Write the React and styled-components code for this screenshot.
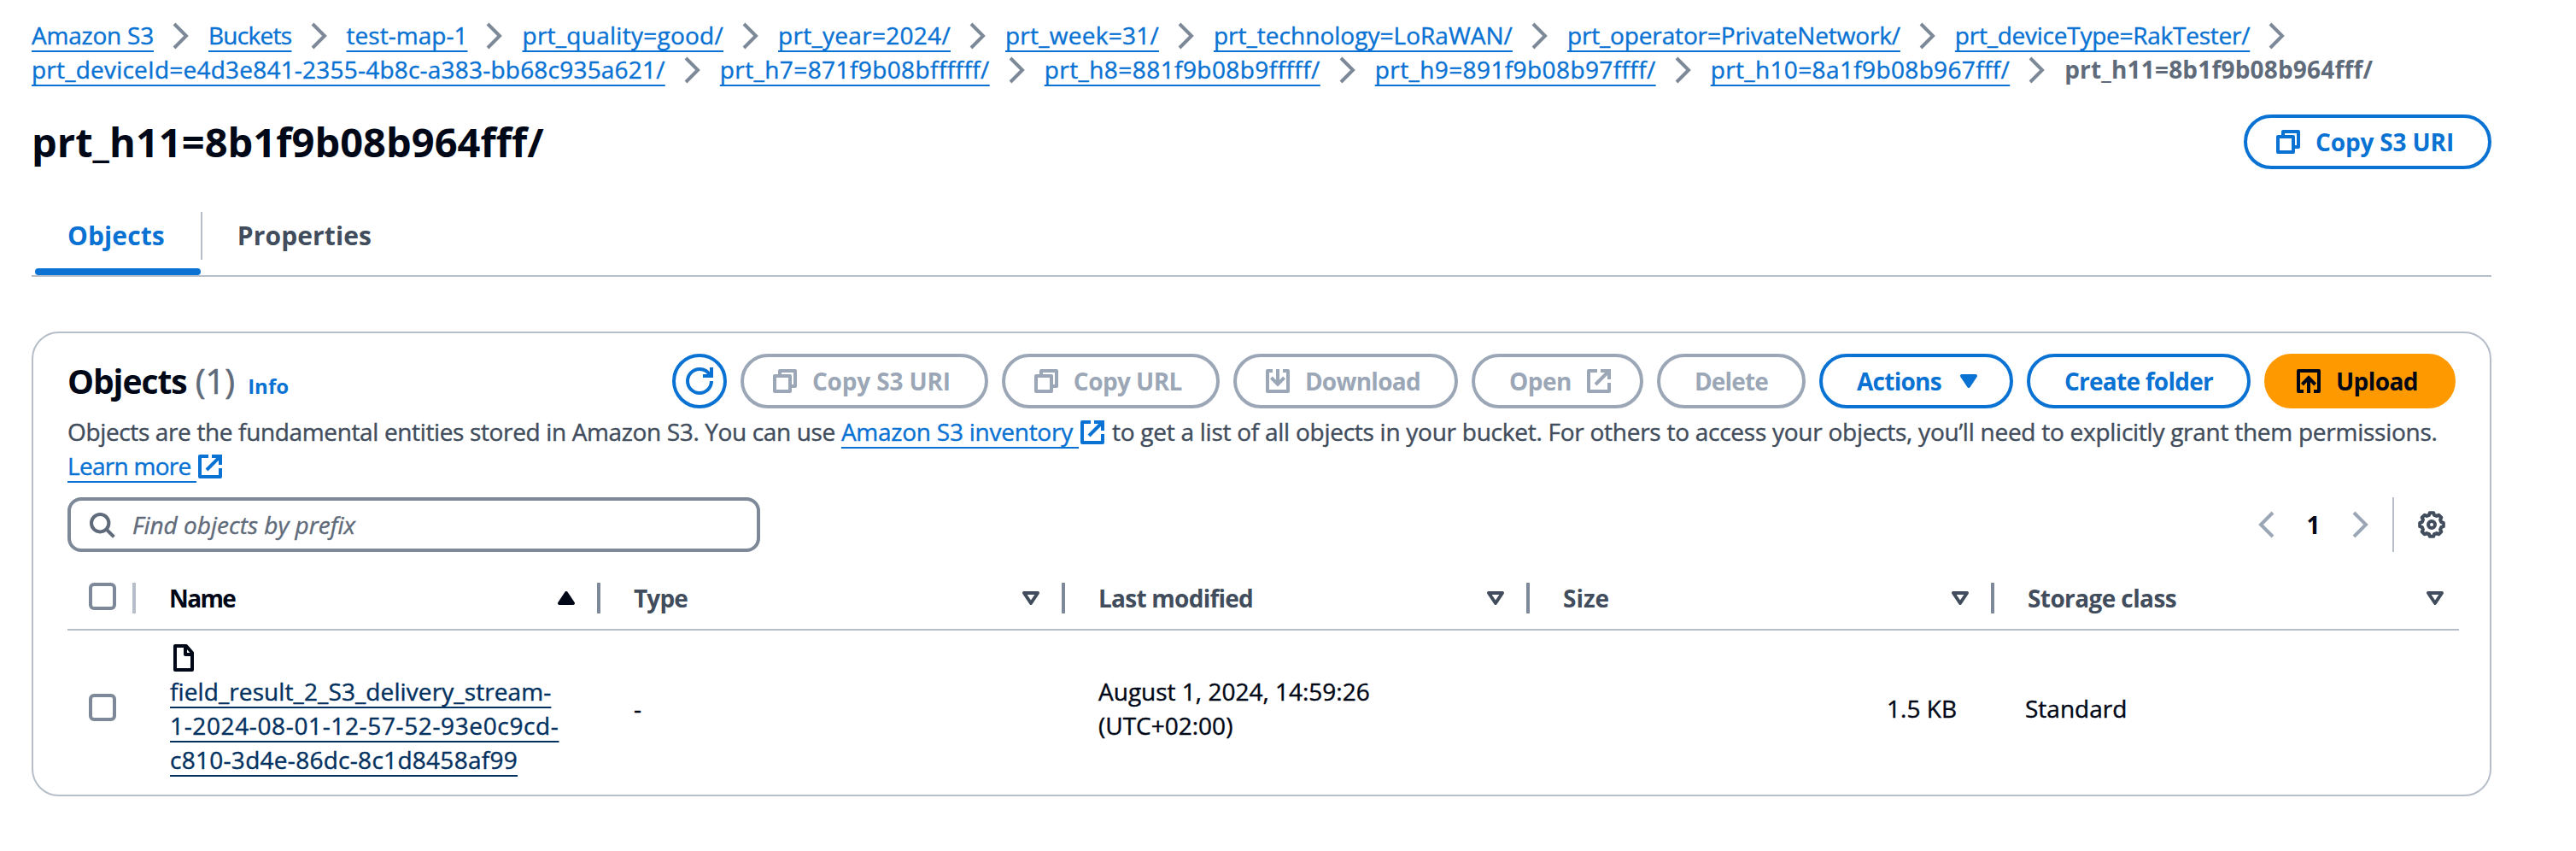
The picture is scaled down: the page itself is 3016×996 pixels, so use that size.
import React from "react";
import styled, { createGlobalStyle, css } from "styled-components";

const GlobalStyle = createGlobalStyle`
  * { box-sizing: border-box; }
  html, body { margin: 0; padding: 0; background: #ffffff; }
  body {
    font-family: "Open Sans", "Noto Sans", sans-serif;
    font-size: 28px;
    line-height: 40px;
    color: #000716;
    -webkit-text-stroke-width: 0.4px;
  }
  h1, h2, p { margin: 0; }
`;

const blue = "#0972d3";
const disabled = "#9ba7b6";

const bold = css`
  font-weight: 700;
  -webkit-text-stroke-width: 0;
`;

const Page = styled.main`
  width: 3016px;
  height: 996px;
  padding: 21px 99px 0 37px;
  overflow: hidden;
`;

const Svg = styled.svg`
  display: block;
  flex: none;
  width: 32px;
  height: 32px;
  fill: none;
  stroke: currentColor;
  stroke-width: 2;
`;

const gearPoints = Array.from({ length: 8 }, (_, tooth) =>
  [
    [-15, 5.8],
    [-9, 7],
    [9, 7],
    [15, 5.8],
  ].map(([offset, radius]) => {
    const angle = ((tooth * 45 + offset) * Math.PI) / 180;
    return `${(8 + radius * Math.cos(angle)).toFixed(2)},${(8 + radius * Math.sin(angle)).toFixed(2)}`;
  })
)
  .flat()
  .join(" ");

const shapes = {
  chevronRight: <path d="m4 1 7 7-7 7" />,
  chevronLeft: <path d="M12 1 5 8l7 7" />,
  copy: (
    <g strokeLinejoin="round">
      <path d="M2 5h9v9H2z" />
      <path d="M5 5V2h9v9h-3" />
    </g>
  ),
  refresh: (
    <>
      <path d="M15 0v5h-5" />
      <path d="M15 8c0 3.87-3.13 7-7 7s-7-3.13-7-7 3.13-7 7-7c2.79 0 5.2 1.63 6.33 4" />
    </>
  ),
  external: (
    <>
      <path d="M9 2h5v5" />
      <path d="m6 10 8-8" />
      <path strokeLinejoin="round" d="M14 9v5H2V2h5" />
    </>
  ),
  download: (
    <>
      <path strokeLinejoin="round" d="M11 2h3v12H2V2h3" />
      <path d="M8 1v8.500M4.200 6 8 9.800 11.800 6" />
    </>
  ),
  upload: (
    <>
      <path strokeLinejoin="round" d="M5 14H2V2h12v12h-3" />
      <path d="M8 15V6.500M4.200 10 8 6.100 11.800 10" />
    </>
  ),
  search: (
    <>
      <circle cx="7.1" cy="7.1" r="5.1" />
      <path d="m10.500 10.500 4.700 4.700" />
    </>
  ),
  caretDown: <path fill="currentColor" strokeLinejoin="round" d="M4 5h8l-4 6z" />,
  sortUp: <path fill="currentColor" strokeLinejoin="round" d="M4 11h8L8 5z" />,
  sortDown: <path strokeLinejoin="round" d="M4 5h8l-4 6z" />,
  file: (
    <g strokeLinejoin="round">
      <path d="M3 1h6.500L13 5v10H3z" />
      <path d="M9 1v5h4" />
    </g>
  ),
  gear: (
    <g strokeLinejoin="round">
      <polygon points={gearPoints} />
      <circle cx="8" cy="8" r="2" />
    </g>
  ),
};

const Icon = ({ name, className }) => (
  <Svg className={className} viewBox="0 0 16 16" aria-hidden="true">
    {shapes[name]}
  </Svg>
);

const Breadcrumbs = styled.nav`
  display: flex;
  flex-direction: column;
`;

const CrumbRow = styled.div`
  display: flex;
  align-items: center;
  height: 40px;
  white-space: nowrap;
`;

const Separator = styled(Icon)`
  margin: 2px 16px 0;
  color: #7d8998;
`;

const Text = styled.span`
  letter-spacing: ${(p) => p.$track || 0}px;
`;

const Link = styled.a`
  color: ${(p) => (p.$visited ? "#033160" : blue)};
  letter-spacing: ${(p) => p.$track || 0}px;
  text-decoration: underline;
  text-decoration-thickness: 2px;
  text-decoration-skip-ink: none;
  text-underline-offset: 7px;
`;

const CurrentCrumb = styled.span`
  ${bold}
  color: #5f6b7a;
  letter-spacing: 0.18px;
`;

const TitleRow = styled.header`
  display: flex;
  justify-content: space-between;
  align-items: flex-start;
  margin-top: 33px;
  height: 64px;
`;

const Title = styled.h1`
  ${bold}
  padding-top: 2px;
  font-size: 47px;
  line-height: 60px;
  letter-spacing: 0.04px;
`;

const Button = styled.button`
  display: flex;
  align-items: center;
  gap: 16px;
  height: 64px;
  padding: 0 ${(p) => (p.$end ? 32 : 40)}px 0 ${(p) => (p.$start ? 32 : 40)}px;
  border: 4px solid ${blue};
  border-radius: 40px;
  background: #ffffff;
  color: ${blue};
  font: 700 28px/40px "Open Sans", "Noto Sans", sans-serif;
  -webkit-text-stroke-width: 0;
  letter-spacing: ${(p) => p.$track || 0}px;
  white-space: nowrap;
  ${(p) =>
    p.$disabled &&
    css`
      border-color: ${disabled};
      color: ${disabled};
    `}
  ${(p) =>
    p.$primary &&
    css`
      border-color: #ff9900;
      background: #ff9900;
      color: #000716;
    `}
  ${(p) =>
    p.$round &&
    css`
      width: 64px;
      padding: 0;
      justify-content: center;
    `}
`;

const Tabs = styled.div`
  display: flex;
  height: 126px;
  padding-top: 50px;
  border-bottom: 2px solid #b6bec9;
`;

const Tab = styled.div`
  ${bold}
  display: flex;
  flex-direction: column;
  justify-content: space-between;
  height: 74px;
  margin-left: ${(p) => (p.$active ? 4 : 0)}px;
  color: ${(p) => (p.$active ? blue : "#414d5c")};
  font-size: 30px;
  letter-spacing: 0.1px;
`;

const TabLabel = styled.span`
  height: 56px;
  padding: 8px 42px 8px ${(p) => (p.$first ? 38 : 41)}px;
  border-right: 2px solid ${(p) => (p.$first ? "#b6bec9" : "transparent")};
`;

const TabBar = styled.div`
  height: 8px;
  margin-right: 2px;
  border-radius: 4px;
  background: ${blue};
`;

const Card = styled.section`
  height: 544px;
  margin-top: 64px;
  padding: 24px 40px 0;
  border: 2px solid #b6bec9;
  border-radius: 32px;
`;

const CardHeader = styled.div`
  display: flex;
  justify-content: space-between;
  height: 64px;
`;

const CardTitle = styled.h2`
  ${bold}
  display: flex;
  align-items: baseline;
  font-size: 39px;
  line-height: 64px;
  letter-spacing: -1.05px;
`;

const Counter = styled.span`
  margin-left: 10px;
  color: #5f6b7a;
  font-size: 40px;
  font-weight: 400;
  letter-spacing: 0;
  -webkit-text-stroke-width: 0.6px;
`;

const InfoLink = styled.a`
  margin-left: 15px;
  color: ${blue};
  font-size: 24px;
  letter-spacing: 0;
`;

const Actions = styled.div`
  display: flex;
  gap: 16px;
`;

const Description = styled.p`
  margin-top: 7px;
  color: #414d5c;
  white-space: nowrap;
`;

const InlineIcon = styled(Icon)`
  display: inline-block;
  vertical-align: -6px;
  color: ${blue};
`;

const Tools = styled.div`
  display: flex;
  justify-content: space-between;
  margin-top: 17px;
  height: 64px;
`;

const SearchBox = styled.div`
  display: flex;
  align-items: center;
  gap: 20px;
  width: 811px;
  padding-left: 20px;
  border: 4px solid #7d8998;
  border-radius: 16px;
  color: #5f6b7a;
  font-style: italic;
`;

const Pager = styled.div`
  display: flex;
  align-items: center;
  color: ${disabled};
`;

const PageNumber = styled.span`
  ${bold}
  width: 79px;
  text-align: center;
  color: #000716;
`;

const Settings = styled.div`
  display: flex;
  align-items: center;
  height: 64px;
  margin-left: 21px;
  padding: 0 12px 0 28px;
  border-left: 2px solid #b6bec9;
  color: #414d5c;
`;

const Row = styled.div`
  display: grid;
  grid-template-columns: 80px repeat(5, 544px);
  width: 2800px;
  align-items: center;
`;

const HeadRow = styled(Row)`
  height: 92px;
  align-items: start;
  padding-top: 36px;
  border-bottom: 2px solid #b6bec9;
`;

const HeadCell = styled.div`
  ${bold}
  display: flex;
  align-items: center;
  justify-content: space-between;
  height: 36px;
  padding: 0 ${(p) => (p.$last ? 12 : 20)}px 0 ${(p) => (p.$check ? 25 : 39)}px;
  border-right: ${(p) => (p.$last ? 0 : 4)}px solid ${(p) => (p.$check ? "#b6bec9" : "#7d8998")};
  color: ${(p) => (p.$sorted ? "#000716" : "#414d5c")};
  letter-spacing: ${(p) => p.$track || 0}px;
`;

const SortIcon = styled(Icon)`
  margin: 0 0 0 auto;
`;

const BodyRow = styled(Row)`
  height: 182px;
`;

const Cell = styled.div`
  padding: 0 44px 0 ${(p) => p.$left || 39}px;
  text-align: ${(p) => (p.$right ? "right" : "left")};
`;

const FileLine = styled.div`
  display: flex;
  height: 40px;
  padding-top: 5px;
`;

const Checkbox = styled.span`
  display: block;
  flex: none;
  width: 32px;
  height: 32px;
  border: 4px solid #7d8998;
  border-radius: 6px;
  margin-bottom: ${(p) => (p.$head ? 4 : 2)}px;
`;

const crumbRows = [
  [
    ["Amazon S3", -0.22],
    ["Buckets", -0.7],
    ["test-map-1", 0.03],
    ["prt_quality=good/", 0.26],
    ["prt_year=2024/", 0.29],
    ["prt_week=31/", 0.25],
    ["prt_technology=LoRaWAN/", 0.02],
    ["prt_operator=PrivateNetwork/", -0.15],
    ["prt_deviceType=RakTester/", -0.25],
  ],
  [
    ["prt_deviceId=e4d3e841-2355-4b8c-a383-bb68c935a621/", 0.21],
    ["prt_h7=871f9b08bffffff/", 0.41],
    ["prt_h8=881f9b08b9fffff/", 0.43],
    ["prt_h9=891f9b08b97ffff/", 0.4],
    ["prt_h10=8a1f9b08b967fff/", 0.36],
  ],
];

const columns = [
  ["Type", -0.85],
  ["Last modified", -0.75],
  ["Size", -0.04],
  ["Storage class", -0.6],
];

export default function App() {
  return (
    <>
      <GlobalStyle />
      <Page>
        <Breadcrumbs>
          {crumbRows.map((row, i) => (
            <CrumbRow key={i}>
              {row.map(([label, track]) => (
                <React.Fragment key={label}>
                  <Link $track={track}>{label}</Link>
                  <Separator name="chevronRight" />
                </React.Fragment>
              ))}
              {i === 1 && <CurrentCrumb>prt_h11=8b1f9b08b964fff/</CurrentCrumb>}
            </CrumbRow>
          ))}
        </Breadcrumbs>

        <TitleRow>
          <Title>prt_h11=8b1f9b08b964fff/</Title>
          <Button $start $track={-0.16}>
            <Icon name="copy" />
            Copy S3 URI
          </Button>
        </TitleRow>

        <Tabs>
          <Tab $active>
            <TabLabel $first>Objects</TabLabel>
            <TabBar />
          </Tab>
          <Tab>
            <TabLabel>Properties</TabLabel>
          </Tab>
        </Tabs>

        <Card>
          <CardHeader>
            <CardTitle>
              Objects<Counter>(1)</Counter>
              <InfoLink>Info</InfoLink>
            </CardTitle>
            <Actions>
              <Button $round>
                <Icon name="refresh" />
              </Button>
              <Button $disabled $start $track={-0.16}>
                <Icon name="copy" />
                Copy S3 URI
              </Button>
              <Button $disabled $start $track={-0.57}>
                <Icon name="copy" />
                Copy URL
              </Button>
              <Button $disabled $start $track={-0.74}>
                <Icon name="download" />
                Download
              </Button>
              <Button $disabled $end $track={-0.49}>
                Open
                <Icon name="external" />
              </Button>
              <Button $disabled $track={-0.84}>
                Delete
              </Button>
              <Button $end $track={-0.72}>
                Actions
                <Icon name="caretDown" />
              </Button>
              <Button $track={-0.74}>Create folder</Button>
              <Button $primary $start $track={-0.57}>
                <Icon name="upload" />
                Upload
              </Button>
            </Actions>
          </CardHeader>

          <Description>
            <Text $track={-0.36}>
              Objects are the fundamental entities stored in Amazon S3. You can use{" "}
            </Text>
            <Link $track={-0.24}>Amazon S3 inventory&nbsp;</Link>
            <InlineIcon name="external" />
            <Text $track={-0.26}>
              {" "}
              to get a list of all objects in your bucket. For others to access your objects, you’ll
              need to explicitly grant them permissions.
            </Text>
            <br />
            <Link $track={-0.72}>Learn more&nbsp;</Link>
            <InlineIcon name="external" />
          </Description>

          <Tools>
            <SearchBox>
              <Icon name="search" />
              Find objects by prefix
            </SearchBox>
            <Pager>
              <Icon name="chevronLeft" />
              <PageNumber>1</PageNumber>
              <Icon name="chevronRight" />
              <Settings>
                <Icon name="gear" />
              </Settings>
            </Pager>
          </Tools>

          <HeadRow>
            <HeadCell $check>
              <Checkbox $head />
            </HeadCell>
            <HeadCell $sorted $track={-1.6}>
              Name
              <SortIcon name="sortUp" />
            </HeadCell>
            {columns.map(([label, track], i) => (
              <HeadCell key={label} $last={i === 3} $track={track}>
                {label}
                <SortIcon name="sortDown" />
              </HeadCell>
            ))}
          </HeadRow>
          <BodyRow>
            <Cell $left={25}>
              <Checkbox />
            </Cell>
            <Cell $left={40}>
              <FileLine>
                <Icon name="file" />
              </FileLine>
              <Link $visited $track={0.1}>
                field_result_2_S3_delivery_stream-
              </Link>
              <br />
              <Link $visited $track={0.63}>
                1-2024-08-01-12-57-52-93e0c9cd-
              </Link>
              <br />
              <Link $visited $track={0.28}>
                c810-3d4e-86dc-8c1d8458af99
              </Link>
            </Cell>
            <Cell>-</Cell>
            <Cell>
              August 1, 2024, 14:59:26
              <br />
              (UTC+02:00)
            </Cell>
            <Cell $right>1.5 KB</Cell>
            <Cell $left={36}>Standard</Cell>
          </BodyRow>
        </Card>
      </Page>
    </>
  );
}
